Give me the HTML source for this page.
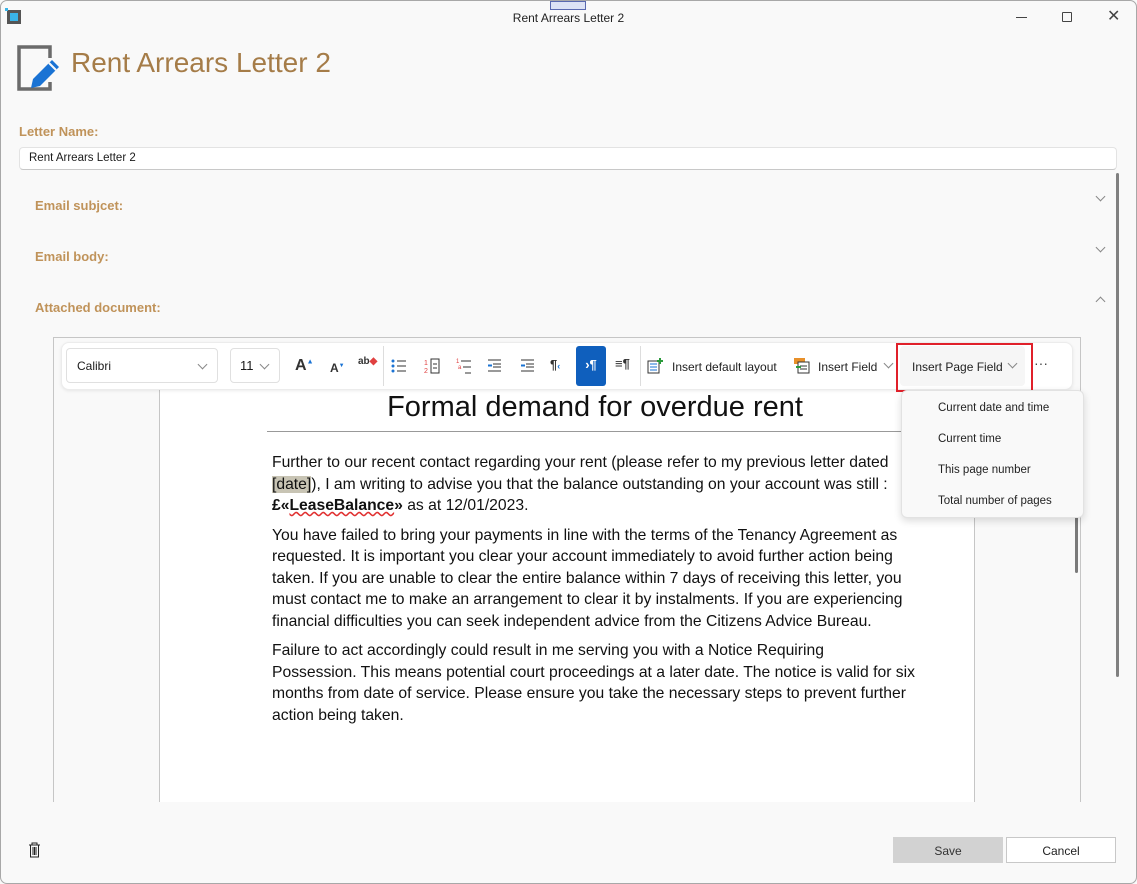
<!DOCTYPE html>
<html><head><meta charset="utf-8"><style>
*{box-sizing:border-box;margin:0;padding:0}
body{width:1137px;height:884px;background:#f9f9f9;font-family:"Liberation Sans",sans-serif;position:relative;overflow:hidden;color:#1b1b1b}
.win{position:absolute;left:0;top:0;width:1137px;height:884px;border:1px solid #a8a8a8;border-radius:7px}
.abs{position:absolute}
.lbl{position:absolute;left:35px;color:#c0935a;font-weight:bold;font-size:13px}
.chev{position:absolute;width:7px;height:7px;border-right:1px solid #888;border-bottom:1px solid #888}
.tb{position:absolute;top:354px;font-size:12px;color:#222}
.body p{white-space:nowrap;font-family:"Liberation Sans",sans-serif;font-size:15.7px;line-height:21.5px;color:#111;margin-bottom:8px}
.menu div{position:absolute;left:36px;font-size:11.5px;color:#222}
</style></head><body>
<div class="win"></div>
<div class="abs" style="left:7px;top:10px;width:14px;height:14px;border:3px solid #555;background:#3ab4e8"></div>
<div class="abs" style="left:5px;top:8px;width:3px;height:3px;background:#3ab4e8"></div>
<div class="abs" style="left:550px;top:1px;width:36px;height:9px;border:1px solid #5a6ab0;background:#dde3f5"></div>
<div class="abs" style="left:0;width:1137px;top:11px;text-align:center;font-size:12px;color:#222">Rent Arrears Letter 2</div>
<div class="abs" style="left:1016px;top:17px;width:11px;height:1px;background:#444"></div>
<div class="abs" style="left:1062px;top:12px;width:10px;height:10px;border:1px solid #444;border-radius:1px"></div>
<div class="abs" style="left:1107px;top:10px;font-size:16px;color:#444;line-height:14px">✕</div>
<svg class="abs" style="left:16px;top:44px" width="48" height="48" viewBox="0 0 48 48">
<path d="M34 14 V3 H3 V45 H34 V38" fill="none" stroke="#6b6b6b" stroke-width="3.5"/>
<path d="M17 35 L36 16 L43 23 L24 42 L15 44 Z" fill="#1a73d4"/>
<path d="M33 19 L40 26" stroke="#f9f9f9" stroke-width="2"/>
</svg>
<div class="abs" style="left:71px;top:47px;font-size:28px;color:#a57c48;font-weight:300">Rent Arrears Letter 2</div>
<div class="lbl" style="left:19px;top:124px">Letter Name:</div>
<div class="abs" style="left:19px;top:147px;width:1098px;height:23px;background:#fff;border:1px solid #e3e3e3;border-bottom-color:#c8c8c8;border-radius:4px;font-size:11.5px;padding:4px 9px">Rent Arrears Letter 2</div>
<div class="lbl" style="top:198px">Email subjcet:</div>
<div class="lbl" style="top:249px">Email body:</div>
<div class="lbl" style="top:300px">Attached document:</div>
<div class="chev" style="left:1097px;top:193px;transform:rotate(45deg)"></div>
<div class="chev" style="left:1097px;top:244px;transform:rotate(45deg)"></div>
<div class="chev" style="left:1097px;top:298px;transform:rotate(-135deg)"></div>
<div class="abs" style="left:1116px;top:173px;width:3px;height:504px;background:#808080;border-radius:2px"></div>
<div class="abs" style="left:53px;top:337px;width:1028px;height:465px;border:1px solid #c6c6c6;border-bottom:none;background:#f9f9f9"></div>
<div class="abs" style="left:159px;top:390px;width:816px;height:412px;background:#fff;border-left:1px solid #c6c6c6;border-right:1px solid #c6c6c6"></div>
<div class="abs" style="left:1075px;top:515px;width:3px;height:58px;background:#7a7a7a;border-radius:2px"></div>
<div class="abs" style="left:61px;top:342px;width:1012px;height:48px;background:#fff;border:1px solid #ececec;border-radius:8px;box-shadow:0 1px 3px rgba(0,0,0,.08)"></div>
<div class="abs" style="left:66px;top:348px;width:152px;height:35px;border:1px solid #e0e0e0;border-radius:4px;font-size:12px;padding:10px 0 0 10px">Calibri</div>
<div class="chev" style="left:199px;top:361px;transform:rotate(45deg)"></div>
<div class="abs" style="left:230px;top:348px;width:50px;height:35px;border:1px solid #e0e0e0;border-radius:4px;font-size:13px;padding:9px 0 0 9px">11</div>
<div class="chev" style="left:261px;top:361px;transform:rotate(45deg)"></div>
<div class="tb" style="left:295px;top:357px;font-size:16px;font-weight:bold;color:#333">A<sup style="font-size:7px;color:#1a73d4">▲</sup></div>
<div class="tb" style="left:330px;top:361px;font-size:12px;font-weight:bold;color:#333">A<sup style="font-size:6px;color:#1a73d4">▼</sup></div>
<div class="tb" style="left:358px;top:356px;font-size:10px;font-weight:bold;color:#333">ab<span style="color:#e04040">◆</span></div>
<div class="abs" style="left:383px;top:346px;width:1px;height:40px;background:#ddd"></div>
<svg class="abs" style="left:391px;top:358px" width="16" height="16"><circle cx="2" cy="3" r="1.5" fill="#1a73d4"/><circle cx="2" cy="8" r="1.5" fill="#1a73d4"/><circle cx="2" cy="13" r="1.5" fill="#1a73d4"/><path d="M6 3h9M6 8h9M6 13h9" stroke="#333"/></svg>
<svg class="abs" style="left:424px;top:357px" width="16" height="18"><text x="0" y="8" font-size="7" fill="#e04040" font-family="Liberation Sans">1</text><text x="0" y="16" font-size="7" fill="#e04040" font-family="Liberation Sans">2</text><rect x="7" y="2" width="8" height="14" fill="none" stroke="#333"/><path d="M9 7h4M9 11h4" stroke="#333"/></svg>
<svg class="abs" style="left:456px;top:357px" width="16" height="18"><text x="0" y="6" font-size="6" fill="#e04040" font-family="Liberation Sans">1</text><text x="2" y="12" font-size="6" fill="#e04040" font-family="Liberation Sans">a</text><path d="M5 4h10M7 10h8M9 16h6" stroke="#333"/></svg>
<svg class="abs" style="left:487px;top:358px" width="16" height="16"><path d="M1 2h13M6 6h8M6 9h8M1 13h13" stroke="#333"/><path d="M1 7.5h4" stroke="#1a73d4" stroke-width="2"/></svg>
<svg class="abs" style="left:520px;top:358px" width="16" height="16"><path d="M1 2h13M6 6h8M6 9h8M1 13h13" stroke="#333"/><path d="M1 7.5h4" stroke="#1a73d4" stroke-width="2"/></svg>
<div class="tb" style="left:550px;top:357px;font-size:13px;font-weight:bold;color:#333">¶<span style="color:#1a73d4;font-size:9px">‹</span></div>
<div class="abs" style="left:576px;top:346px;width:30px;height:40px;background:#0f5fbd;border-radius:3px;color:#fff;font-weight:bold;font-size:13px;text-align:center;padding-top:11px">›¶</div>
<div class="tb" style="left:615px;top:356px;font-size:13px;font-weight:bold;color:#333">≡¶</div>
<div class="abs" style="left:640px;top:346px;width:1px;height:40px;background:#ddd"></div>
<svg class="abs" style="left:647px;top:358px" width="16" height="16"><rect x="1" y="3" width="11" height="12" fill="none" stroke="#333"/><path d="M3 6h7M3 9h7M3 12h7" stroke="#1a73d4"/><path d="M13 0v6M10 3h6" stroke="#2a9a3a" stroke-width="2"/></svg>
<div class="tb" style="left:672px;top:360px">Insert default layout</div>
<svg class="abs" style="left:794px;top:358px" width="16" height="16"><rect x="0" y="0" width="11" height="6" fill="#e8902a"/><rect x="4" y="4" width="11" height="11" fill="#fff" stroke="#333"/><path d="M6 8h7M6 11h7" stroke="#333"/><path d="M2 9h5" stroke="#2a9a3a" stroke-width="2"/></svg>
<div class="tb" style="left:818px;top:360px">Insert Field</div>
<div class="chev" style="left:885px;top:360px;transform:rotate(45deg)"></div>
<div class="abs" style="left:900px;top:346px;width:125px;height:40px;background:#f6f6f6;border-radius:4px"></div>
<div class="tb" style="left:912px;top:360px">Insert Page Field</div>
<div class="chev" style="left:1009px;top:360px;transform:rotate(45deg)"></div>
<div class="abs" style="left:896px;top:343px;width:137px;height:49px;border:2px solid #e0202a"></div>
<div class="tb" style="left:1034px;top:355px;font-size:14px;color:#444">···</div>
<div class="abs" style="left:160px;top:391px;width:870px;text-align:center;font-size:29px;color:#111">Formal demand for overdue rent</div>
<div class="abs" style="left:267px;top:431px;width:650px;height:1px;background:#999"></div>
<div class="abs body" style="left:272px;top:452px">
<p>Further to our recent contact regarding your rent (please refer to my previous letter dated<br><span style="background:#c8c4b4">[date]</span>), I am writing to advise you that the balance outstanding on your account was still :<br><b>£«<span style="text-decoration:underline wavy #e03030">LeaseBalance</span>»</b> as at 12/01/2023.</p>
<p>You have failed to bring your payments in line with the terms of the Tenancy Agreement as<br>requested. It is important you clear your account immediately to avoid further action being<br>taken. If you are unable to clear the entire balance within 7 days of receiving this letter, you<br>must contact me to make an arrangement to clear it by instalments. If you are experiencing<br>financial difficulties you can seek independent advice from the Citizens Advice Bureau.</p>
<p>Failure to act accordingly could result in me serving you with a Notice Requiring<br>Possession. This means potential court proceedings at a later date. The notice is valid for six<br>months from date of service. Please ensure you take the necessary steps to prevent further<br>action being taken.</p>
</div>
<div class="abs menu" style="left:901px;top:390px;width:183px;height:128px;background:#f9f9f9;border:1px solid #e2e2e2;border-radius:6px;box-shadow:0 3px 8px rgba(0,0,0,.14)">
<div style="top:11px">Current date and time</div>
<div style="top:42px">Current time</div>
<div style="top:73px">This page number</div>
<div style="top:104px">Total number of pages</div>
</div>
<svg class="abs" style="left:28px;top:842px" width="13" height="16"><path d="M1 3h11M4 3V1h5v2M2.5 3v12h8V3M5 5v8M6.5 5v8M8 5v8" fill="none" stroke="#222"/></svg>
<div class="abs" style="left:893px;top:837px;width:110px;height:26px;background:#d2d2d2;font-size:12px;text-align:center;padding-top:7px;color:#333">Save</div>
<div class="abs" style="left:1006px;top:837px;width:110px;height:26px;background:#fff;border:1px solid #c8c8c8;font-size:12px;text-align:center;padding-top:6px;color:#222">Cancel</div>
</body></html>
